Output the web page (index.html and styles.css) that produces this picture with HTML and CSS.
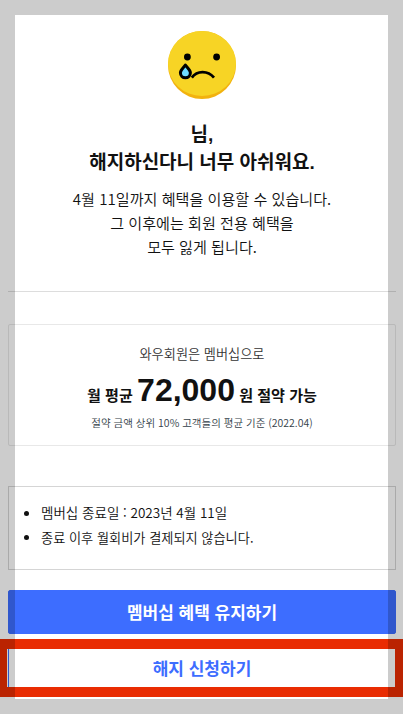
FILE: index.html
```html
<!DOCTYPE html>
<html lang="ko">

<head>
    <meta charset="UTF-8">
    <meta name="viewport" content="width=device-width, initial-scale=1.0">
    <title>멤버십 해지</title>
    <link rel="stylesheet" href="styles.css">
</head>

<body>
    <main class="page">
        <section class="intro">
            <svg class="face" width="68" height="68" viewBox="0 0 68 68">
                <circle cx="34" cy="34" r="34" fill="#f2b20f"/>
                <ellipse cx="34" cy="32.5" rx="34" ry="32.5" fill="#f7d425"/>
                <circle cx="19.4" cy="26" r="3.4" fill="#000"/>
                <circle cx="48.6" cy="26" r="3.4" fill="#000"/>
                <path d="M23.8 46.6C29 39.2 40 39.2 46 46.6" fill="none" stroke="#000" stroke-width="2.7"/>
                <path d="M17.4 34C15.4 37 12.4 39 12.4 41.8A5 5 0 0 0 22.4 41.8C22.4 39 19.4 37 17.4 34Z" fill="#6fdcff" stroke="#000" stroke-width="3" stroke-linejoin="round"/>
            </svg>
            <h1 class="title">님,<br>해지하신다니 너무 아쉬워요.</h1>
            <p class="desc">4월 11일까지 혜택을 이용할 수 있습니다.<br>그 이후에는 회원 전용 혜택을<br>모두 잃게 됩니다.</p>
        </section>
        <section class="saving">
            <p class="saving-label">와우회원은 멤버십으로</p>
            <p class="saving-amount">월 평균 <strong>72,000</strong> 원 절약 가능</p>
            <p class="saving-note">절약 금액 상위 10% 고객들의 평균 기준 (2022.04)</p>
        </section>
        <ul class="notice">
            <li class="notice-end">멤버십 종료일 : 2023년 4월 11일</li>
            <li>종료 이후 월회비가 결제되지 않습니다.</li>
        </ul>
        <button class="btn btn-keep">멤버십 혜택 유지하기</button>
        <div class="highlight">
            <button class="btn btn-cancel">해지 신청하기</button>
        </div>
    </main>
    <div class="frame"></div>
</body>

</html>
```

FILE: styles.css
```css
*,
*::after {
    box-sizing: border-box;
    margin: 0;
    padding: 0;
}

body {
    width: 403px;
    height: 714px;
    overflow: hidden;
    background-color: #fff;
    color: #111;
    font-family: "Liberation Sans", "Noto Sans CJK KR", sans-serif;
}

.page {
    display: flex;
    flex-direction: column;
    padding: 31px 7px 0 8px;
}

.intro {
    display: flex;
    flex-direction: column;
    align-items: center;
    height: 261px;
    border-bottom: 1px solid #ddd;
    text-align: center;
}

.face {
    flex: none;
}

.title {
    margin-top: 22px;
    font-size: 19px;
    line-height: 28px;
}

.desc,
.saving-label,
.saving-note,
.notice {
    font-family: "Noto Sans CJK KR", sans-serif;
    font-weight: 350;
}

.desc {
    margin-top: 9px;
    font-size: 15.1px;
    line-height: 24px;
}

.saving {
    height: 122px;
    margin-top: 32px;
    padding-top: 17px;
    border: 1px solid #e8e8e8;
    border-radius: 2px;
    text-align: center;
}

.saving-label {
    color: #333;
    font-size: 13.2px;
    line-height: 24px;
}

.saving-amount {
    height: 46px;
    font-size: 15.1px;
    font-weight: bold;
    line-height: 48px;
}

.saving-amount strong {
    font-size: 32px;
}

.saving-note {
    color: #333e48;
    font-size: 10.5px;
    line-height: 21px;
}

.notice {
    height: 84px;
    margin-top: 40px;
    padding: 13px 0 0 32px;
    border: 1px solid #d5d5d5;
    font-size: 13.2px;
    line-height: 25px;
}

.notice-end {
    font-size: 13.5px;
}

.btn {
    width: 100%;
    height: 44px;
    padding-top: 2px;
    border: 1px solid #3d6dff;
    border-radius: 2px;
    font-family: inherit;
    font-size: 17px;
    font-weight: bold;
    line-height: 42px;
}

.btn-keep {
    margin-top: 20px;
    background-color: #3d6dff;
    color: #fff;
}

.btn-cancel {
    background-color: #fff;
    color: #3d6dff;
}

/* red marker around the cancel button */
.highlight {
    position: relative;
    height: 58px;
    margin-top: 5px;
    padding-top: 7px;
}

.highlight::after {
    content: "";
    position: absolute;
    top: 0;
    left: -8px;
    width: 403px;
    height: 58px;
    border: solid #e92c02;
    border-width: 10px 8px 10px 7px;
}

/* translucent border over the whole screen */
.frame {
    position: absolute;
    top: 0;
    left: 0;
    width: 403px;
    height: 714px;
    border: 15px solid rgba(0, 0, 0, 0.2);
}
```
